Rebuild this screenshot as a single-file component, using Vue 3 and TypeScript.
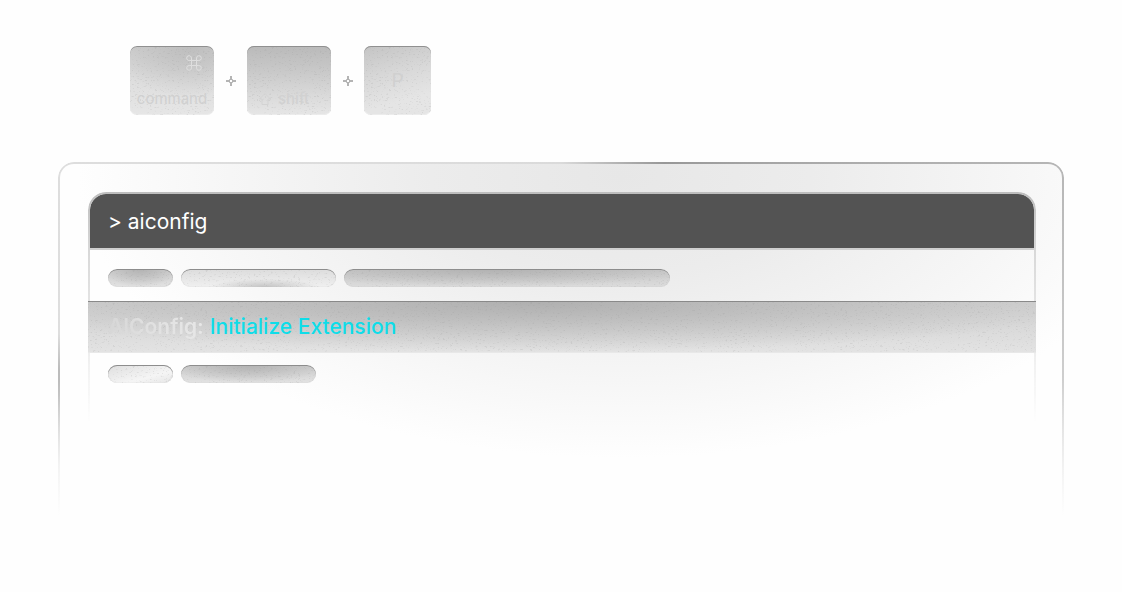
<script setup lang="ts">
import { ref } from 'vue'

interface Placeholder {
  size: string
  tone: string
}

const query = ref<string>('> aiconfig')

const above: Placeholder[] = [
  { size: 'short', tone: 'shade' },
  { size: 'medium', tone: 'light' },
  { size: 'long', tone: 'wide' },
]
const below: Placeholder[] = [
  { size: 'short', tone: 'pale' },
  { size: 'middle', tone: 'shade' },
]
</script>

<template>
  <main class="page">
    <svg class="defs" aria-hidden="true">
      <filter id="grain" x="0" y="0" width="100%" height="100%">
        <feTurbulence type="fractalNoise" baseFrequency="0.4 0.7" numOctaves="2" seed="7" />
        <feColorMatrix values="0 0 0 0 0.3  0 0 0 0 0.3  0 0 0 0 0.3  7 0 0 0 -4.3" />
      </filter>
    </svg>

    <div class="shortcut">
      <kbd class="key command">
        <svg class="grain" aria-hidden="true"><rect width="100%" height="100%" filter="url(#grain)" /></svg>
        <svg class="command-icon" viewBox="0 0 16 16" aria-hidden="true">
          <path d="M5.5 5.5h5v5h-5zM5.5 5.5H3.2a2.4 2.4 0 1 1 2.3-2.4zM10.5 5.5V3.1a2.4 2.4 0 1 1 2.3 2.4zM10.5 10.5h2.3a2.4 2.4 0 1 1-2.3 2.4zM5.5 10.5v2.4a2.4 2.4 0 1 1-2.3-2.4z" />
        </svg>
        <span>command</span>
      </kbd>
      <svg class="plus" viewBox="0 0 33 12" aria-hidden="true">
        <path class="plus-arm" d="M17 1v3M17 8v3M12 6h3M19 6h3" />
        <path class="plus-line" d="M15.500 4.500h3v3h-3z" />
      </svg>
      <kbd class="key shift">
        <svg class="grain" aria-hidden="true"><rect width="100%" height="100%" filter="url(#grain)" /></svg>
        <svg class="shift-icon" viewBox="0 0 14 14" aria-hidden="true">
          <path d="M7 1.500 1.500 7H4v5.500h6V7h2.500z" />
        </svg>
        <span>shift</span>
      </kbd>
      <svg class="plus" viewBox="0 0 33 12" aria-hidden="true">
        <path class="plus-arm" d="M17 1v3M17 8v3M12 6h3M19 6h3" />
        <path class="plus-line" d="M15.500 4.500h3v3h-3z" />
      </svg>
      <kbd class="key letter">
        <svg class="grain" aria-hidden="true"><rect width="100%" height="100%" filter="url(#grain)" /></svg>
        <span>P</span>
      </kbd>
    </div>

    <section class="panel">
      <div class="palette">
        <div class="search">
          <input v-model="query" type="text" aria-label="Command" spellcheck="false" />
        </div>
        <div class="row first">
          <span v-for="(bar, i) in above" :key="i" class="bar" :class="[bar.size, bar.tone]">
            <svg class="grain" aria-hidden="true"><rect width="100%" height="100%" filter="url(#grain)" /></svg>
          </span>
        </div>
        <button type="button" class="result">
          <svg class="grain" aria-hidden="true"><rect width="100%" height="100%" filter="url(#grain)" /></svg>
          <span class="prefix">AIConfig:</span>
          <span class="action">Initialize Extension</span>
        </button>
        <div class="row last">
          <span v-for="(bar, i) in below" :key="i" class="bar" :class="[bar.size, bar.tone]">
            <svg class="grain" aria-hidden="true"><rect width="100%" height="100%" filter="url(#grain)" /></svg>
          </span>
        </div>
      </div>
    </section>
  </main>
</template>

<style>
body {
  background: #fefefe;
}
</style>

<style scoped>
.page {
  box-sizing: border-box;
  min-height: 100vh;
  padding: 46px 58px 72px;
  font-family: Inter, "Liberation Sans", sans-serif;
}

.defs {
  position: absolute;
  width: 0;
  height: 0;
}

.grain {
  position: absolute;
  inset: 0;
  width: 100%;
  height: 100%;
  opacity: 0.18;
  pointer-events: none;
}

.shortcut {
  display: flex;
  align-items: center;
  margin: 0 72px 47px;
}

.key {
  position: relative;
  box-sizing: border-box;
  display: flex;
  flex: none;
  width: 84px;
  height: 69px;
  overflow: hidden;
  border-radius: 7px;
  font-family: inherit;
  font-size: 15px;
  line-height: 18px;
  color: #d0d0d0;
  box-shadow: inset 0 1px 0 #909090, inset 0 -1px 0 #ececec;
}

.key span,
.command-icon,
.shift-icon {
  position: relative;
}

.command {
  flex-direction: column;
  align-items: center;
  justify-content: space-between;
  padding: 9px 0 7px;
  background: radial-gradient(ellipse 90% 75% at 70% 0, #bebebe, transparent), linear-gradient(#cdcdcd, #dedede 50%, #e6e6e6);
}

.command-icon {
  align-self: flex-end;
  width: 16px;
  height: 16px;
  margin-right: 12px;
  fill: none;
  stroke: #dedede;
}

.shift {
  align-items: flex-end;
  gap: 6px;
  padding: 0 0 7px 11px;
  font-weight: 500;
  color: #d1d1d1;
  background: linear-gradient(#bababa, #c8c8c8 35%, #dadada 72%, #e6e6e6);
}

.shift-icon {
  width: 14px;
  height: 14px;
  margin-bottom: 2px;
  fill: none;
  stroke: #d3d3d3;
}

.letter {
  align-items: center;
  justify-content: center;
  width: 67px;
  font-size: 19px;
  color: #d0d0d0;
  background: linear-gradient(165deg, #c4c4c4, #d8d8d8 40%, #e5e5e5 75%);
}

.plus {
  flex: none;
  width: 33px;
  height: 12px;
}

.plus-arm {
  stroke: #b4b4b4;
  stroke-width: 2;
}

.plus-line {
  fill: none;
  stroke: #b0b0b0;
  stroke-width: 1;
}

.panel {
  position: relative;
  padding: 30px 28px 96px 30px;
  border-radius: 16px 16px 0 0;
  background: radial-gradient(ellipse 54% 78% at 56% 4%, #e7e7e7, #ececec 35%, #f6f6f6 72%, #fefefe);
}

.panel::before,
.palette::before {
  content: "";
  position: absolute;
  inset: 0;
  padding: 2px;
  border-radius: inherit;
  mask: linear-gradient(#000 0 0) content-box exclude, linear-gradient(#000 0 0);
  pointer-events: none;
}

.panel::before {
  background: linear-gradient(transparent 60%, #fefefe 98%),
    conic-gradient(at 50% 50%, #dadada 0deg, #979797 30deg, #b5b5b5 70deg, #cfcfcf 95deg, #ddd 105deg, #e0e0e0 256deg, #bcbcbc 264deg, #bcbcbc 267deg, #dedede 271deg, #dadada 360deg);
}

.palette {
  position: relative;
  padding: 2px;
  border-radius: 18px 18px 0 0;
}

.palette::before {
  background: linear-gradient(#bdbdbd, #d8d8d8 25%, #eee 68%, rgb(240 240 240 / 0) 98%);
}

.search {
  height: 54px;
  padding: 0 18px;
  border-bottom: 2px solid #cfcfcf;
  border-radius: 16px 16px 0 0;
  background: #535353;
}

input {
  display: block;
  box-sizing: border-box;
  width: 100%;
  height: 54px;
  padding: 0;
  border: 0;
  outline: 0;
  background: none;
  font: 21px/24px Inter, "Liberation Sans", sans-serif;
  color: #fff;
}

.row {
  display: flex;
  gap: 8px;
  padding: 0 18px;
}

.first {
  padding-top: 19px;
  padding-bottom: 14px;
}

.last {
  padding-top: 12px;
  padding-bottom: 42px;
}

.bar {
  position: relative;
  height: 18px;
  overflow: hidden;
  border-radius: 9px;
  box-shadow: inset 0 1px 0 #8d8d8d, inset 0 0 1px #c4c4c4;
}

.short { width: 65px; }
.middle { width: 135px; }
.medium { width: 155px; }
.long { width: 326px; }

.shade {
  background: radial-gradient(ellipse 60% 100% at 50% 0, #b3b3b3, transparent), linear-gradient(#cdcdcd, #e2e2e2);
}

.light {
  background: radial-gradient(ellipse 35% 45% at 54% 100%, #c3c3c3, transparent), linear-gradient(#dcdcdc, #f0f0f0);
}

.wide {
  background: radial-gradient(ellipse 65% 100% at 45% 0, #b2b2b2, transparent), linear-gradient(#c8c8c8, #dcdcdc);
}

.pale {
  background: linear-gradient(165deg, #dedede, #f5f5f5 65%, #e5e5e5);
}

.result {
  position: relative;
  box-sizing: border-box;
  display: flex;
  align-items: center;
  gap: 6px;
  width: calc(100% + 4px);
  height: 52px;
  margin: 0 -2px;
  padding: 0 20px;
  border: 0;
  border-top: 1px solid #898989;
  border-bottom: 1px solid #e8e8e8;
  background: radial-gradient(ellipse 60% 100% at 47% 0, #b0b0b0, transparent), linear-gradient(#d0d0d0, #e3e3e3);
  font: 21px/24px Inter, "Liberation Sans", sans-serif;
  text-align: left;
}

.prefix {
  position: relative;
  font-weight: 600;
  color: transparent;
  background: linear-gradient(90deg, #d6d6d6, #e0e0e0 40%, #e7e7e7);
  background-clip: text;
}

.action {
  position: relative;
  font-weight: 500;
  color: #0edde9;
}
</style>
